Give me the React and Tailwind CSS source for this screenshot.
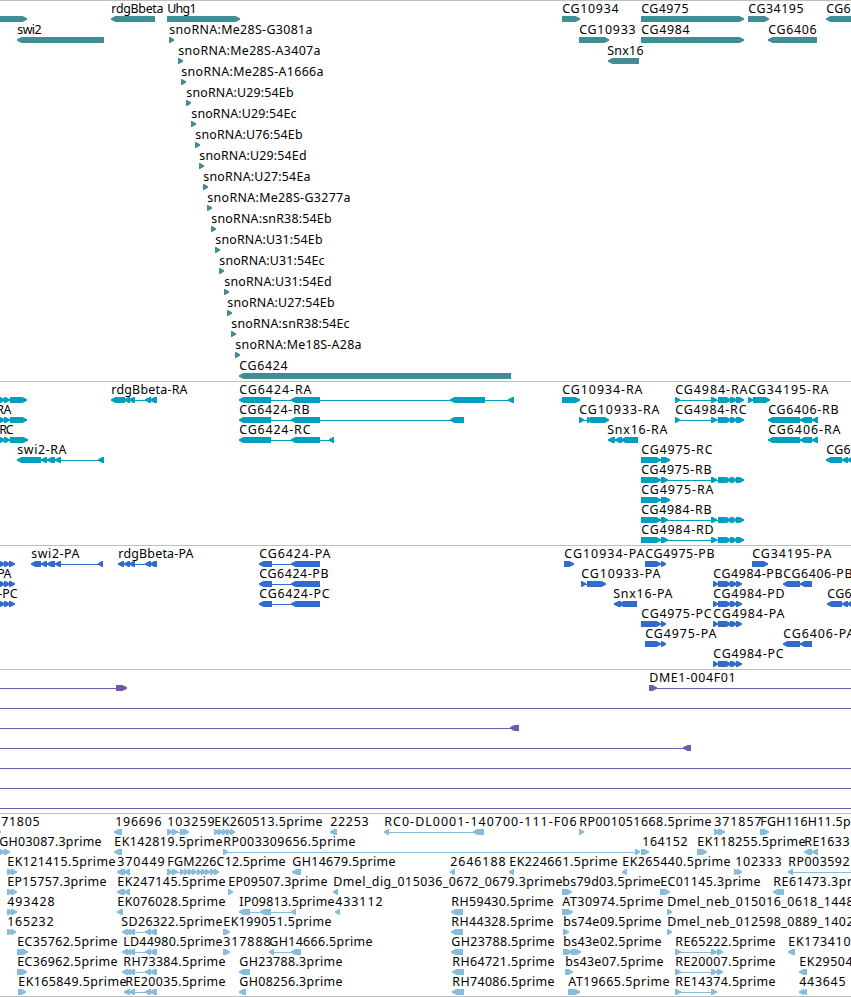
const HEAD = 4.5;

// exon layouts shared by several transcripts
const SWI2 = [[41, 47], [47, 55], [55, 61]];
const RDG = [[124, 130], [129, 135], [145, 151], [150, 157]];
const CG4984 = [[711, 717], [718, 731], [730, 737], [736, 744]];
const CG4984_CDS = [[713, 718], [718, 731], [730, 737], [736, 742]];
const CG6406 = [[768, 800], [800, 812], [812, 818]];
const RDG_EST = [[122, 128], [126, 131], [129, 135], [145, 151], [150, 157]];

// feature: [row, strand, exons, label, labelStart, labelEnd]
const genes = [
  [0, "+", [[-20, 27]]],
  [1, "-", [[17, 104]], "swi2", 17, 42],
  [0, "-", [[111, 155]], "rdgBbeta", 111, 164],
  [0, "+", [[167, 240]], "Uhg1", 167, 197],
  [1, "+", [[169, 174]], "snoRNA:Me28S-G3081a", 169, 313],
  [2, "+", [[178, 183]], "snoRNA:Me28S-A3407a", 178, 321],
  [3, "+", [[181, 186]], "snoRNA:Me28S-A1666a", 181, 324],
  [4, "+", [[186, 191]], "snoRNA:U29:54Eb", 186, 294],
  [5, "+", [[191, 196]], "snoRNA:U29:54Ec", 191, 297],
  [6, "+", [[195, 200]], "snoRNA:U76:54Eb", 195, 303],
  [7, "+", [[199, 204]], "snoRNA:U29:54Ed", 199, 307],
  [8, "+", [[203, 208]], "snoRNA:U27:54Ea", 203, 311],
  [9, "+", [[207, 212]], "snoRNA:Me28S-G3277a", 207, 351],
  [10, "+", [[211, 216]], "snoRNA:snR38:54Eb", 211, 332],
  [11, "+", [[215, 220]], "snoRNA:U31:54Eb", 215, 323],
  [12, "+", [[219, 224]], "snoRNA:U31:54Ec", 219, 325],
  [13, "+", [[224, 229]], "snoRNA:U31:54Ed", 224, 332],
  [14, "+", [[227, 232]], "snoRNA:U27:54Eb", 227, 335],
  [15, "+", [[231, 236]], "snoRNA:snR38:54Ec", 231, 350],
  [16, "+", [[235, 240]], "snoRNA:Me18S-A28a", 235, 362],
  [17, "-", [[239, 511]], "CG6424", 239, 288],
  [0, "+", [[562, 580]], "CG10934", 562, 619],
  [1, "+", [[579, 609]], "CG10933", 579, 636],
  [2, "-", [[608, 639]], "Snx16", 607, 644],
  [0, "+", [[641, 744]], "CG4975", 641, 689],
  [1, "+", [[641, 744]], "CG4984", 641, 690],
  [0, "+", [[748, 769]], "CG34195", 748, 804],
  [1, "-", [[768, 817]], "CG6406", 768, 817],
  [0, "-", [[826, 880]], "CG6", 826, 851],
];

const transcripts = [
  [0, "+", [[-1, 5], [4, 10], [10, 27]]],
  [1, "+", [[-1, 5], [4, 10], [10, 27]], "RA", -4, 12],
  [2, "+", [[-1, 5], [4, 10], [10, 28]], "RC", -1, 14],
  [3, "-", [[17, 41], ...SWI2, [98, 104]], "swi2-RA", 17, 67],
  [0, "-", [[111, 125], ...RDG], "rdgBbeta-RA", 111, 188],
  [0, "-", [[239, 271], [291, 320], [450, 485], [508, 514]], "CG6424-RA", 239, 312],
  [1, "-", [[239, 271], [291, 320], [450, 464]], "CG6424-RB", 239, 310],
  [2, "-", [[239, 271], [291, 320], [329, 334]], "CG6424-RC", 239, 311],
  [0, "+", [[562, 580]], "CG10934-RA", 562, 643],
  [1, "+", [[579, 584], [587, 592], [590, 609]], "CG10933-RA", 579, 660],
  [2, "-", [[608, 615], [615, 622], [621, 638]], "Snx16-RA", 607, 668],
  [0, "+", [[675, 680], ...CG4984], "CG4984-RA", 675, 748],
  [1, "+", [[675, 680], ...CG4984], "CG4984-RC", 675, 747],
  [0, "+", [[748, 753], [753, 770]], "CG34195-RA", 748, 829],
  [1, "-", CG6406, "CG6406-RB", 768, 839],
  [2, "-", CG6406, "CG6406-RA", 768, 841],
  [3, "-", [[826, 842], [842, 848], [847, 860]], "CG6", 826, 851],
  [3, "+", [[641, 661], [661, 670]], "CG4975-RC", 641, 713],
  [4, "+", [[641, 661], [661, 668], ...CG4984], "CG4975-RB", 641, 712],
  [5, "+", [[641, 661], [661, 670]], "CG4975-RA", 641, 714],
  [6, "+", [[641, 661], [661, 668], ...CG4984], "CG4984-RB", 641, 712],
  [7, "+", [[641, 661], [661, 668], ...CG4984], "CG4984-RD", 641, 714],
];

const proteins = [
  [0, "+", [[-4, 5], [4, 10], [9, 15]]],
  [1, "+", [[-4, 5], [4, 10], [9, 15]], "PA", -3, 12],
  [2, "+", [[-4, 5], [4, 10], [9, 15]], "-PC", -2, 18],
  [0, "-", [[31, 41], ...SWI2, [98, 103]], "swi2-PA", 31, 80],
  [0, "-", [[118, 124], ...RDG], "rdgBbeta-PA", 118, 194],
  [0, "-", [[259, 272], [291, 320]], "CG6424-PA", 259, 331],
  [1, "-", [[259, 272], [291, 320]], "CG6424-PB", 259, 329],
  [2, "-", [[259, 272], [291, 320]], "CG6424-PC", 259, 330],
  [0, "+", [[564, 574]], "CG10934-PA", 564, 645],
  [0, "+", [[645, 661], [661, 666]], "CG4975-PB", 645, 715],
  [0, "+", [[752, 768]], "CG34195-PA", 752, 832],
  [1, "+", [[581, 586], [587, 606]], "CG10933-PA", 581, 661],
  [1, "+", CG4984_CDS, "CG4984-PB", 713, 783],
  [1, "-", [[783, 800], [800, 812]], "CG6406-PB", 783, 853],
  [2, "-", [[614, 621], [619, 637]], "Snx16-PA", 613, 673],
  [2, "+", CG4984_CDS, "CG4984-PD", 713, 785],
  [2, "-", [[827, 842], [842, 848], [847, 860]], "CG6", 827, 852],
  [3, "+", [[641, 661], [661, 666]], "CG4975-PC", 641, 712],
  [3, "+", CG4984_CDS, "CG4984-PA", 713, 785],
  [4, "+", [[645, 661], [661, 666]], "CG4975-PA", 645, 717],
  [4, "-", [[783, 800], [800, 812]], "CG6406-PA", 783, 855],
  [5, "+", CG4984_CDS, "CG4984-PC", 713, 784],
];

const clones = [
  [0, "+", [[-20, -10], [116, 127]]],
  [0, "+", [[649, 657], [870, 880]], "DME1-004F01", 649, 736],
  [1, "+", [[-20, -10], [870, 880]]],
  [2, "-", [[-20, -10], [510, 519]]],
  [3, "-", [[-20, -10], [683, 691]]],
  [4, "+", [[-20, -10], [870, 880]]],
  [5, "+", [[-20, -10], [870, 880]]],
  [6, "+", [[-20, -10], [870, 880]]],
];

const ests = [
  [0, "+", [[-6, 1]], "71805", 1, 40],
  [0, "-", [[114, 122]], "196696", 115, 162],
  [0, "+", [[167, 173], [172, 178], [180, 186], [183, 189]], "103259", 167, 215],
  [0, "+", [[214, 219], [218, 223], [222, 227], [226, 231], [230, 235]], "EK260513.5prime", 214, 323],
  [0, "-", [[330, 337]], "22253", 330, 369],
  [0, "-", [[384, 389], [473, 484]], "RC0-DL0001-140700-111-F06", 384, 577],
  [0, "+", [[579, 584]], "RP001051668.5prime", 579, 712],
  [0, "+", [[714, 720], [718, 725]], "371857", 714, 762],
  [0, "+", [[760, 769]], "FGH116H11.5prime", 760, 879],

  [1, "+", [[-1, 5], [4, 10]], "GH03087.3prime", -1, 102],
  [1, "-", [[114, 122]], "EK142819.5prime", 114, 223],
  [1, "+", [[223, 228], [635, 640]], "RP003309656.5prime", 223, 356],
  [1, "+", [[641, 649]], "164152", 642, 688],
  [1, "+", [[697, 707]], "EK118255.5prime", 697, 806],
  [1, "-", [[804, 812], [812, 818]], "RE1633", 804, 850],

  [2, "+", [[7, 13], [11, 17]], "EK121415.5prime", 7, 116],
  [2, "-", [[117, 125], [124, 130]], "370449", 117, 165],
  [
    2,
    "+",
    [[167, 173], [172, 178], [180, 185], [184, 189], [188, 193], [192, 197], [197, 202], [201, 206], [205, 210], [210, 215], [214, 219]],
    "FGM226C12.5prime",
    167,
    286,
  ],
  [2, "-", [[292, 301]], "GH14679.5prime", 292, 396],
  [2, "-", [[450, 455]], "2646188", 450, 506],
  [2, "-", [[509, 514]], "EK224661.5prime", 509, 618],
  [2, "-", [[622, 627]], "EK265440.5prime", 622, 731],
  [2, "+", [[734, 739], [737, 742]], "102333", 735, 782],
  [2, "-", [[788, 793], [870, 880]], "RP003592", 788, 850],

  [3, "+", [[7, 13], [11, 17]], "EP15757.3prime", 7, 107],
  [3, "-", [[117, 125], [124, 130]], "EK247145.5prime", 117, 226],
  [3, "+", [[228, 233]], "EP09507.3prime", 228, 328],
  [3, "-", [[333, 338]], "Dmel_dig_015036_0672_0679.3prime", 333, 563],
  [3, "+", [[562, 572]], "bs79d03.5prime", 562, 661],
  [3, "+", [[660, 670]], "EC01145.3prime", 660, 761],
  [3, "-", [[773, 784]], "RE61473.3prime", 773, 876],

  [4, "+", [[7, 13], [11, 17]], "493428", 7, 55],
  [4, "-", [[117, 123]], "EK076028.5prime", 117, 226],
  [4, "-", [[239, 250], [260, 271], [291, 296]], "IP09813.5prime", 239, 335],
  [4, "-", [[335, 340]], "433112", 335, 383],
  [4, "-", [[451, 463]], "RH59430.5prime", 451, 554],
  [4, "+", [[562, 573]], "AT30974.5prime", 562, 664],
  [4, "+", [[667, 672]], "Dmel_neb_015016_0618_1448", 667, 854],

  [5, "+", [[7, 13], [11, 16]], "165232", 7, 54],
  [5, "-", RDG_EST, "SD26322.5prime", 121, 223],
  [5, "+", [[223, 230]], "EK199051.5prime", 223, 332],
  [5, "-", [[451, 463]], "RH44328.5prime", 451, 554],
  [5, "+", [[563, 569]], "bs74e09.5prime", 563, 662],
  [5, "+", [[667, 672]], "Dmel_neb_012598_0889_1402", 667, 854],

  [6, "+", [[17, 28]], "EC35762.5prime", 17, 118],
  [6, "-", RDG_EST, "LD44980.5prime", 123, 223],
  [6, "+", [[223, 230]], "317888", 223, 271],
  [6, "-", [[269, 274], [291, 301]], "GH14666.5prime", 269, 373],
  [6, "-", [[451, 463]], "GH23788.5prime", 451, 555],
  [6, "+", [[563, 572], [571, 581]], "bs43e02.5prime", 563, 662],
  [6, "+", [[675, 681], [711, 717], [717, 723]], "RE65222.5prime", 675, 776],
  [6, "-", [[788, 795]], "EK173410", 788, 851],

  [7, "+", [[17, 27]], "EC36962.5prime", 17, 118],
  [7, "-", RDG_EST, "RH73384.5prime", 123, 226],
  [7, "-", [[239, 250]], "GH23788.3prime", 239, 343],
  [7, "-", [[452, 464]], "RH64721.5prime", 452, 555],
  [7, "+", [[565, 573]], "bs43e07.5prime", 565, 664],
  [7, "+", [[675, 681], [711, 717], [717, 723]], "RE20007.5prime", 675, 776],
  [7, "-", [[799, 807]], "EK29504", 799, 853],

  [8, "+", [[18, 26]], "EK165849.5prime", 18, 127],
  [8, "-", RDG, "RE20035.5prime", 125, 226],
  [8, "-", [[239, 246]], "GH08256.3prime", 239, 343],
  [8, "-", [[452, 464]], "RH74086.5prime", 452, 555],
  [8, "+", [[568, 580]], "AT19665.5prime", 568, 670],
  [8, "+", [[675, 681], [711, 717]], "RE14374.5prime", 675, 776],
  [8, "-", [[799, 804], [802, 807]], "443645", 799, 846],
];

function Exon({ x1, x2, y, strand }) {
  const head = Math.min(HEAD, x2 - x1 - 1);
  const points =
    strand === "+"
      ? `${x1},${y} ${x2 - head},${y} ${x2},${y + 2.2} ${x2},${y + 3.8} ${x2 - head},${y + 6} ${x1},${y + 6}`
      : `${x2},${y} ${x1 + head},${y} ${x1},${y + 2.2} ${x1},${y + 3.8} ${x1 + head},${y + 6} ${x2},${y + 6}`;
  return <polygon points={points} />;
}

function Feature({ feature, pitch }) {
  const [row, strand, exons, label, start, end] = feature;
  const y = row * pitch + 15;
  const first = exons[0][0];
  const last = exons[exons.length - 1][1];

  return (
    <g>
      {exons.length > 1 && (
        <rect x={first + 2} y={y + 3} width={last - first - 4} height="1" />
      )}
      {exons.map(([x1, x2]) => (
        <Exon key={x1} x1={x1} x2={x2} y={y} strand={strand} />
      ))}
      {label && (
        <text x={start + 0.3} y={y - 3} textLength={end - start - 0.8} className="fill-black">
          {label}
        </text>
      )}
    </g>
  );
}

function Track({ name, features, pitch = 20, className }) {
  return (
    <section aria-label={name} className={`w-full border-t border-[#bfbfbf] ${className}`}>
      <svg className="block h-full w-full overflow-hidden font-['Noto_Sans','Open_Sans',sans-serif] text-[12.4px]">
        {features.map((f, i) => (
          <Feature key={i} feature={f} pitch={pitch} />
        ))}
      </svg>
    </section>
  );
}

export default function App() {
  return (
    <main className="flex h-[997px] w-[851px] flex-col overflow-hidden border-b border-[#bfbfbf] bg-white">
      <Track name="Genes" features={genes} pitch={21} className="h-[381px] fill-[#3e8e94]" />
      <Track name="Transcripts" features={transcripts} className="h-[164px] fill-[#009ebf]" />
      <Track name="Proteins" features={proteins} className="h-[124px] fill-[#316ccc]" />
      <Track name="Clones" features={clones} className="h-[144px] fill-[#7558a8]" />
      <Track name="ESTs" features={ests} className="h-[183px] fill-[#88bcdd]" />
    </main>
  );
}
